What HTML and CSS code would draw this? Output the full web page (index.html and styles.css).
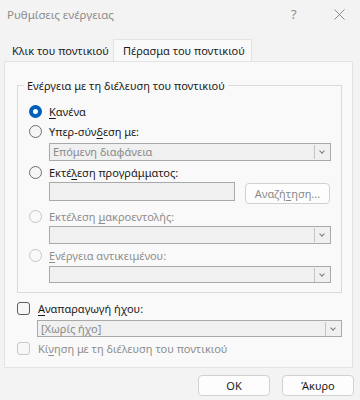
FILE: index.html
```html
<!DOCTYPE html>
<html lang="el">
<head>
    <meta charset="UTF-8">
    <meta name="viewport" content="width=device-width, initial-scale=1.0">
    <title>Ρυθμίσεις ενέργειας</title>
    <link rel="stylesheet" href="styles.css">
</head>
<body>

    <!-- Title bar -->
    <div class="titlebar">
        <span class="title">Ρυθμίσεις ενέργειας</span>
        <span class="help">?</span>
        <span class="close">
            <svg width="11" height="11" viewBox="0 0 11 11"><path d="M0.5 0.5L10.5 10.5M10.5 0.5L0.5 10.5" stroke="#8a8a8a" stroke-width="1"/></svg>
        </span>
    </div>

    <!-- Tabs -->
    <div class="tabs">
        <div class="tab">Κλικ του ποντικιού</div>
        <div class="tab active">Πέρασμα του ποντικιού</div>
    </div>

    <div class="panel">
        <fieldset class="group">
            <legend>Ενέργεια με τη διέλευση του ποντικιού</legend>

            <div class="option row-none">
                <span class="radio checked"></span>
                <span><u>Κ</u>ανένα</span>
            </div>

            <div class="option row-link">
                <span class="radio"></span>
                <span>Υπερ-σύν<u>δ</u>εση με:</span>
            </div>
            <div class="select sel-link"><span>Επόμενη διαφάνεια</span><i class="arrow"></i></div>

            <div class="option row-run">
                <span class="radio"></span>
                <span>Εκτέ<u>λ</u>εση προγράμματος:</span>
            </div>
            <div class="run-line">
                <div class="textbox"></div>
                <button class="btn browse">Αναζή<u>τ</u>ηση...</button>
            </div>

            <div class="option disabled row-macro">
                <span class="radio"></span>
                <span>Εκτέλεση <u>μ</u>ακροεντολής:</span>
            </div>
            <div class="select sel-macro"><span></span><i class="arrow"></i></div>

            <div class="option disabled row-object">
                <span class="radio"></span>
                <span><u>Ε</u>νέργεια αντικειμένου:</span>
            </div>
            <div class="select sel-object"><span></span><i class="arrow"></i></div>
        </fieldset>

        <div class="check-line sound">
            <span class="checkbox"></span>
            <span><u>Α</u>ναπαραγωγή ήχου:</span>
        </div>
        <div class="select sel-sound"><span>[Χωρίς ήχο]</span><i class="arrow"></i></div>

        <div class="check-line disabled motion">
            <span class="checkbox"></span>
            <span>Κί<u>ν</u>ηση με τη διέλευση του ποντικιού</span>
        </div>
    </div>

    <!-- Dialog buttons -->
    <div class="footer">
        <button class="btn">OK</button>
        <button class="btn">Άκυρο</button>
    </div>

</body>
</html>
```

FILE: styles.css
```css
body {
    margin: 0;
    padding: 0;
    width: 360px;
    height: 400px;
    background-color: #f3f3f3;
    font-family: "Noto Sans", "Open Sans", sans-serif;
    font-size: 11px;
    color: #1b1b1b;
    overflow: hidden;
}
u {
    text-decoration: underline;
    text-underline-offset: 2px;
}

/* Title bar */
.titlebar {
    display: flex;
    align-items: center;
    height: 28px;
    padding: 0 0 0 7px;
}
.title {
    flex: 1;
    color: #8c8c8c;
    font-size: 11.5px;
}
.help {
    width: 14px;
    color: #8c8c8c;
    font-size: 13px;
    margin-right: 29px;
}
.close {
    display: flex;
    width: 26px;
}

/* Tabs */
.tabs {
    display: flex;
    align-items: flex-end;
    margin: 11px 0 0 8px;
    height: 22px;
    white-space: nowrap;
}
.tab {
    height: 19px;
    line-height: 18px;
    width: 105px;
    padding-left: 4px;
    box-sizing: border-box;
}
.tab.active {
    height: 22px;
    line-height: 21px;
    width: 139px;
    padding-left: 9px;
    background-color: #f9f9f9;
    border: 1px solid #e3e3e3;
    border-bottom: none;
}

/* Panel */
.panel {
    margin: 0 7px 0 4px;
    height: 307px;
    box-sizing: border-box;
    background-color: #f9f9f9;
    border: 1px solid #e3e3e3;
    padding: 0 0 0 12px;
}

/* Group box */
.group {
    margin: 16px 10px 0 0;
    padding: 0 10px 9px 11px;
    border: 1px solid #dadada;
    height: 215px;
    box-sizing: border-box;
    display: flex;
    flex-direction: column;
}
.group legend {
    padding: 0 3px;
    margin-left: -5px;
}

.option {
    display: flex;
    align-items: center;
    height: 20px;
    gap: 7px;
}
.disabled {
    color: #8e8e8e;
}
.row-none { margin-top: 9px; }
.row-link { margin-top: 1px; }
.row-run { margin-top: 2px; }
.row-macro { margin-top: 3px; }
.row-object { margin-top: 2px; }

.radio {
    width: 13px;
    height: 13px;
    border-radius: 50%;
    border: 1px solid #6f6f6f;
    box-sizing: border-box;
    background-color: #f5f5f5;
}
.radio.checked {
    border: 4px solid #005fb8;
    background-color: #ffffff;
}
.disabled .radio {
    border-color: #c6c6c6;
    background-color: #f9f9f9;
}

/* Drop-down boxes */
.select {
    position: relative;
    height: 18px;
    box-sizing: border-box;
    border: 1px solid #a9a9a9;
    background-color: #f0f0f0;
    color: #8a8a8a;
    line-height: 16px;
    padding-left: 3px;
}
.select .arrow {
    position: absolute;
    right: 0;
    top: 1px;
    width: 15px;
    height: 14px;
    border-left: 1px solid #c4c4c4;
}
.select .arrow::after {
    content: "";
    position: absolute;
    left: 5px;
    top: 4px;
    width: 3px;
    height: 3px;
    border-right: 1px solid #7a7a7a;
    border-bottom: 1px solid #7a7a7a;
    transform: rotate(45deg);
}
.sel-link,
.sel-macro,
.sel-object {
    margin-left: 20px;
}
.sel-link { margin-top: 2px; }
.sel-object { margin-top: 1px; }

.run-line {
    display: flex;
    align-items: flex-start;
    margin-left: 20px;
    height: 22px;
}
.textbox {
    width: 186px;
    height: 19px;
    box-sizing: border-box;
    border: 1px solid #a9a9a9;
    background-color: #f0f0f0;
}

/* Buttons */
.btn {
    font-family: inherit;
    font-size: 11px;
    height: 21px;
    width: 72px;
    padding: 0;
    border: 1px solid #d1d1d1;
    border-radius: 4px;
    background-color: #fdfdfd;
    color: #1b1b1b;
}
.browse {
    margin: 1px 0 0 10px;
    width: 85px;
    color: #8a8a8a;
}

/* Check boxes */
.check-line {
    display: flex;
    align-items: center;
    gap: 8px;
    height: 20px;
}
.sound { margin-top: 5px; }
.checkbox {
    width: 13px;
    height: 13px;
    box-sizing: border-box;
    border: 1px solid #5e5e5e;
    border-radius: 3px;
    background-color: #f7f7f7;
}
.disabled .checkbox {
    border-color: #c8c8c8;
}
.sel-sound {
    margin: 2px 10px 0 20px;
    height: 17px;
    line-height: 15px;
}
.motion { margin-top: 1px; }

/* Footer */
.footer {
    display: flex;
    justify-content: flex-end;
    gap: 12px;
    margin: 7px 6px 0 0;
}
```
